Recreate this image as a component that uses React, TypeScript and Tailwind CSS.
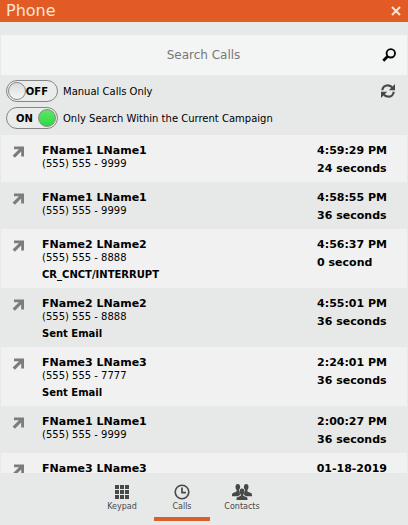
import { useState } from 'react';

interface Call {
  id: number;
  name: string;
  phone: string;
  time: string;
  duration: string;
  note?: string;
}

const calls: Call[] = [
  { id: 1, name: 'FName1 LName1', phone: '(555) 555 - 9999', time: '4:59:29 PM', duration: '24 seconds' },
  { id: 2, name: 'FName1 LName1', phone: '(555) 555 - 9999', time: '4:58:55 PM', duration: '36 seconds' },
  { id: 3, name: 'FName2 LName2', phone: '(555) 555 - 8888', time: '4:56:37 PM', duration: '0 second', note: 'CR_CNCT/INTERRUPT' },
  { id: 4, name: 'FName2 LName2', phone: '(555) 555 - 8888', time: '4:55:01 PM', duration: '36 seconds', note: 'Sent Email' },
  { id: 5, name: 'FName3 LName3', phone: '(555) 555 - 7777', time: '2:24:01 PM', duration: '36 seconds', note: 'Sent Email' },
  { id: 6, name: 'FName1 LName1', phone: '(555) 555 - 9999', time: '2:00:27 PM', duration: '36 seconds' },
  { id: 7, name: 'FName3 LName3', phone: '(555) 555 - 7777', time: '01-18-2019', duration: '24 seconds' },
];

function KeypadIcon() {
  return (
    <svg className="w-5 h-4" viewBox="0 0 20 16" fill="currentColor" shapeRendering="crispEdges">
      <path d="M3 1h4v4H3zM8 1h4v4H8zM13 1h4v4h-4zM3 6h4v4H3zM8 6h4v4H8zM13 6h4v4h-4zM3 11h4v4H3zM8 11h4v4H8zM13 11h4v4h-4z" />
    </svg>
  );
}

function ClockIcon() {
  return (
    <svg className="w-5 h-4" viewBox="0 0 20 16" fill="none" stroke="currentColor">
      <circle cx="10" cy="8" r="6.8" strokeWidth="1.6" />
      <path d="M10 3.5V8.7H14" strokeWidth="1.7" />
    </svg>
  );
}

function ContactsIcon() {
  return (
    <svg className="w-5 h-4" viewBox="0 0 20 16" fill="currentColor">
      <ellipse cx="5.8" cy="3" rx="2.3" ry="2.9" />
      <ellipse cx="14.2" cy="3" rx="2.3" ry="2.9" />
      <path d="M4.6 5h2.4v2.2l.8.6c-.3 1.4 0 2.3.6 3l-2.6 1.4H0v-1.4c0-1.4 1-2 2.8-2.5 1.2-.4 1.8-.7 1.8-1.3zM15.4 5H13v2.2l-.8.6c.3 1.4 0 2.3-.6 3l2.6 1.4H20v-1.4c0-1.4-1-2-2.8-2.5-1.2-.4-1.8-.7-1.8-1.3z" />
      <ellipse cx="10" cy="7.4" rx="2.4" ry="3" />
      <path d="M8.800 9.500h2.400v1.700c0 .6.6.8 1.800 1.200 1.700.5 2.500 1 2.500 2.200V16h-11v-1.400c0-1.200.8-1.700 2.500-2.200 1.200-.4 1.800-.6 1.800-1.200z" />
    </svg>
  );
}

const tabs = [
  { id: 'keypad', label: 'Keypad', Icon: KeypadIcon },
  { id: 'calls', label: 'Calls', Icon: ClockIcon },
  { id: 'contacts', label: 'Contacts', Icon: ContactsIcon },
];

interface ToggleProps {
  label: string;
  checked: boolean;
  onChange: (checked: boolean) => void;
}

function Toggle({ label, checked, onChange }: ToggleProps) {
  return (
    <label className="relative flex items-center gap-[5px] cursor-pointer">
      <input
        type="checkbox"
        className="sr-only"
        checked={checked}
        onChange={(e) => onChange(e.target.checked)}
      />
      <span
        aria-hidden="true"
        className={`flex h-[22px] w-[52px] items-center justify-between rounded-full border border-[#858585] bg-[#eaeceb] px-px text-[10px] font-bold ${
          checked ? 'flex-row-reverse' : ''
        }`}
      >
        <span
          className={`h-[18px] w-[18px] rounded-full border border-[#8a8a8a] bg-gradient-to-b ${
            checked ? 'from-[#62e268] to-[#1fdc3c]' : 'from-[#dcdcdc] to-[#f6f6f6]'
          }`}
        />
        <span className={checked ? 'pl-2' : 'pr-2'}>{checked ? 'ON' : 'OFF'}</span>
      </span>
      <span className="text-[10px]">{label}</span>
    </label>
  );
}

function CallRow({ call }: { call: Call }) {
  return (
    <li className="flex items-start bg-[#e7e9e8] pl-[11px] pr-5 pt-[9px] pb-1.5 odd:bg-[#f1f1f1]">
      <svg className="mt-0.5 mr-[18px] h-3 w-3 shrink-0 text-[#7c7c7c]" viewBox="0 0 12 12" fill="currentColor">
        <path d="M2 .5H12v10H9.200V5.400L2.900 11.800.6 9.600 7 3.300H2z" />
      </svg>
      <div className="min-w-0 flex-1">
        <h2 className="text-[11px] leading-[14px] font-bold">{call.name}</h2>
        <p className="text-[10px] leading-3">{call.phone}</p>
        {call.note && <p className="mt-1 text-[10px] leading-[14px] font-bold">{call.note}</p>}
      </div>
      <div className="text-[11px] leading-[14px] font-bold">
        <p>{call.time}</p>
        <p className="mt-1">{call.duration}</p>
      </div>
    </li>
  );
}

export default function App() {
  const [manualOnly, setManualOnly] = useState(false);
  const [currentCampaign, setCurrentCampaign] = useState(true);
  const [query, setQuery] = useState('');
  const [activeTab, setActiveTab] = useState('calls');

  return (
    <div className="flex h-screen flex-col bg-[#e7e9e8] font-['DejaVu_Sans',Verdana,sans-serif] text-black">
      <header className="flex h-[22px] shrink-0 items-center justify-between bg-[#e25b24] pl-1.5 pr-[7px] text-[#fbe3d6]">
        <h1 className="text-base leading-5">Phone</h1>
        <button type="button" aria-label="Close">
          <svg className="h-[10px] w-[10px]" viewBox="0 0 10 10" fill="none" stroke="currentColor" strokeWidth="2">
            <path d="M1 1l8 8M9 1L1 9" />
          </svg>
        </button>
      </header>

      {/* Search */}
      <form
        className="mx-px mt-[13px] flex h-10 shrink-0 items-center bg-[#f3f5f4] pr-[11px]"
        onSubmit={(e) => e.preventDefault()}
      >
        <input
          type="text"
          aria-label="Search Calls"
          placeholder="Search Calls"
          value={query}
          onChange={(e) => setQuery(e.target.value)}
          className="h-full min-w-0 flex-1 pl-6 text-center text-xs outline-none placeholder:text-[#777777]"
        />
        <button type="submit" aria-label="Search">
          <svg className="h-[14px] w-[14px]" viewBox="0 0 14 14" fill="none" stroke="currentColor">
            <circle cx="8.800" cy="5.300" r="4.200" strokeWidth="1.900" />
            <path d="M5.700 8.300L1.300 12.700" strokeWidth="2.800" />
          </svg>
        </button>
      </form>

      {/* Filters */}
      <div className="flex shrink-0 items-start justify-between pt-[5px] pb-1.5 pl-1.5 pr-[13px]">
        <div className="flex flex-col gap-[5px]">
          <Toggle label="Manual Calls Only" checked={manualOnly} onChange={setManualOnly} />
          <Toggle
            label="Only Search Within the Current Campaign"
            checked={currentCampaign}
            onChange={setCurrentCampaign}
          />
        </div>
        <button type="button" aria-label="Refresh" className="mt-1 text-[#484848]">
          <svg className="h-[14px] w-[14px]" viewBox="0 0 14 14" fill="none" stroke="currentColor" strokeWidth="2.200">
            <path d="M1.300 6.200C1.500 3.200 4 1.300 6.800 1.300c2 0 3.600.9 4.700 2.500" />
            <path d="M12.700 7.800c-.2 3-2.700 4.900-5.500 4.900-2 0-3.600-.9-4.700-2.500" />
            <path d="M14 0v6.200H7.800zM0 14V7.800h6.200z" fill="currentColor" stroke="none" />
          </svg>
        </button>
      </div>

      <ul className="mx-px min-h-0 flex-1 overflow-y-auto [scrollbar-width:none]">
        {calls.map((call) => (
          <CallRow key={call.id} call={call} />
        ))}
      </ul>

      {/* Bottom tabs */}
      <nav className="flex h-[52px] shrink-0 items-start justify-center gap-1 pr-11 pt-[11px] text-[#484848]">
        {tabs.map(({ id, label, Icon }) => (
          <button
            key={id}
            type="button"
            onClick={() => setActiveTab(id)}
            className={`flex h-[37px] w-14 flex-col items-center border-b-4 text-[8px] leading-[14px] ${
              activeTab === id ? 'border-[#d9602e]' : 'border-transparent'
            }`}
          >
            <Icon />
            {label}
          </button>
        ))}
      </nav>
    </div>
  );
}
